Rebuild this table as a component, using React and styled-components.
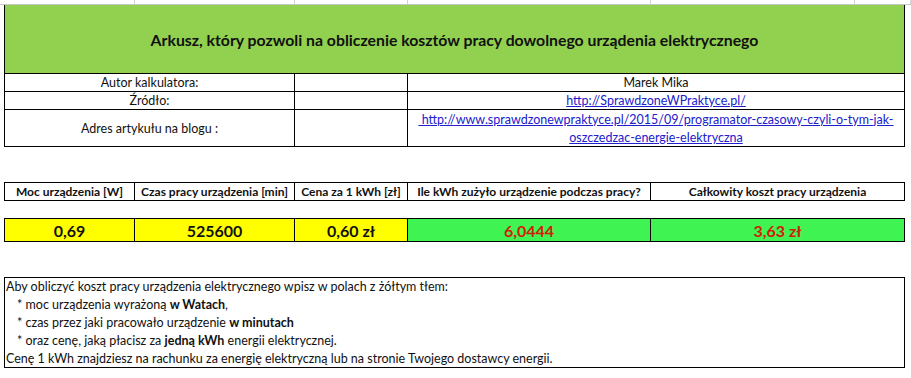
import React from 'react';
import styled, { createGlobalStyle } from 'styled-components';

const GlobalStyle = createGlobalStyle`
    html, body {
        margin: 0;
        padding: 0;
        background: #fff;
    }
    body {
        font-family: Lato, "Liberation Sans", sans-serif;
        color: #111;
    }
`;

const Page = styled.div`
    width: 911px;
    height: 378px;
    overflow: hidden;
`;

const GridStrip = styled.div`
    display: flex;
    height: 4px;
    border-bottom: 1px solid #c8c8c8;
`;

const StripCell = styled.div`
    width: ${(p) => p.$w}px;
    flex: none;
    border-right: 1px solid #d4d4d4;
    box-sizing: border-box;
`;

const Sheet = styled.div`
    margin-left: 4px;
    width: 901px;
`;

const Title = styled.div`
    height: 68px;
    box-sizing: border-box;
    background: #92d050;
    border-left: 1px solid #000;
    border-right: 1px solid #000;
    display: flex;
    align-items: center;
    justify-content: center;
    font-weight: 700;
    font-size: 15.8px;
    padding-top: 0;
`;

const Grid = styled.div`
    display: grid;
    grid-template-columns: ${(p) => p.$cols};
    grid-auto-rows: ${(p) => p.$rows || 'auto'};
    gap: 1px;
    background: #000;
    border: 1px solid #000;
    margin-top: ${(p) => p.$top || 0}px;
`;

const Cell = styled.div`
    background: ${(p) => p.$bg || '#fff'};
    display: flex;
    align-items: center;
    justify-content: center;
    text-align: center;
    font-size: ${(p) => p.$size || 12.5}px;
    font-weight: ${(p) => (p.$bold ? 700 : 400)};
    color: ${(p) => p.$color || '#111'};
    line-height: 18px;
    padding-top: ${(p) => p.$pt || 1}px;
    box-sizing: border-box;
    white-space: nowrap;
`;

const Link = styled.span`
    color: #2020cc;
    text-decoration: underline;
`;

const Notes = styled.div`
    margin-top: 35px;
    border: 1px solid #000;
    height: 91px;
    box-sizing: border-box;
    padding: 0 0 0 1px;
    font-size: 12.5px;
    line-height: 18px;
`;

const NoteLine = styled.div`
    padding-left: ${(p) => (p.$bullet ? 11 : 0)}px;
    white-space: nowrap;
`;

const COLS = '129px 159px 112px 242px 253px';

const App = () => {
    return (
        <Page>
            <GlobalStyle />
            <GridStrip>
                <StripCell $w={135} />
                <StripCell $w={160} />
                <StripCell $w={113} />
                <StripCell $w={243} />
                <StripCell $w={204} />
                <StripCell $w={56} />
            </GridStrip>
            <Sheet>
                <Title>Arkusz, który pozwoli na obliczenie kosztów pracy dowolnego urządenia elektrycznego</Title>
                <Grid $cols="289px 112px 496px" $rows="17px 17px 36px">
                    <Cell>Autor kalkulatora:</Cell>
                    <Cell />
                    <Cell>Marek Mika</Cell>
                    <Cell>Źródło:</Cell>
                    <Cell />
                    <Cell><Link>http://SprawdzoneWPraktyce.pl/</Link></Cell>
                    <Cell>Adres artykułu na blogu :</Cell>
                    <Cell />
                    <Cell>
                        <Link>
                            &nbsp;http://www.sprawdzonewpraktyce.pl/2015/09/programator-czasowy-czyli-o-tym-jak-
                            <br />
                            oszczedzac-energie-elektryczna
                        </Link>
                    </Cell>
                </Grid>
                <Grid $cols={COLS} $rows="17px" $top={35}>
                    <Cell $bold $size={12}>Moc urządzenia [W]</Cell>
                    <Cell $bold $size={12}>Czas pracy urządzenia [min]</Cell>
                    <Cell $bold $size={12}>Cena za 1 kWh [zł]</Cell>
                    <Cell $bold $size={12}>Ile kWh zużyło urządzenie podczas pracy?</Cell>
                    <Cell $bold $size={12}>Całkowity koszt pracy urządzenia</Cell>
                </Grid>
                <Grid $cols={COLS} $rows="22px" $top={17}>
                    <Cell $bg="#ffff00" $bold $size={16}>0,69</Cell>
                    <Cell $bg="#ffff00" $bold $size={16}>525600</Cell>
                    <Cell $bg="#ffff00" $bold $size={16}>0,60 zł</Cell>
                    <Cell $bg="#3ff452" $bold $size={16} $color="#d0200a">6,0444</Cell>
                    <Cell $bg="#3ff452" $bold $size={16} $color="#d0200a">3,63 zł</Cell>
                </Grid>
                <Notes>
                    <NoteLine>Aby obliczyć koszt pracy urządzenia elektrycznego wpisz w polach z żółtym tłem:</NoteLine>
                    <NoteLine $bullet>* moc urządzenia wyrażoną <b>w Watach</b>,</NoteLine>
                    <NoteLine $bullet>* czas przez jaki pracowało urządzenie <b>w minutach</b></NoteLine>
                    <NoteLine $bullet>* oraz cenę, jaką płacisz za <b>jedną kWh</b> energii elektrycznej.</NoteLine>
                    <NoteLine>Cenę 1 kWh znajdziesz na rachunku za energię elektryczną lub na stronie Twojego dostawcy energii.</NoteLine>
                </Notes>
            </Sheet>
        </Page>
    );
};

export default App;
